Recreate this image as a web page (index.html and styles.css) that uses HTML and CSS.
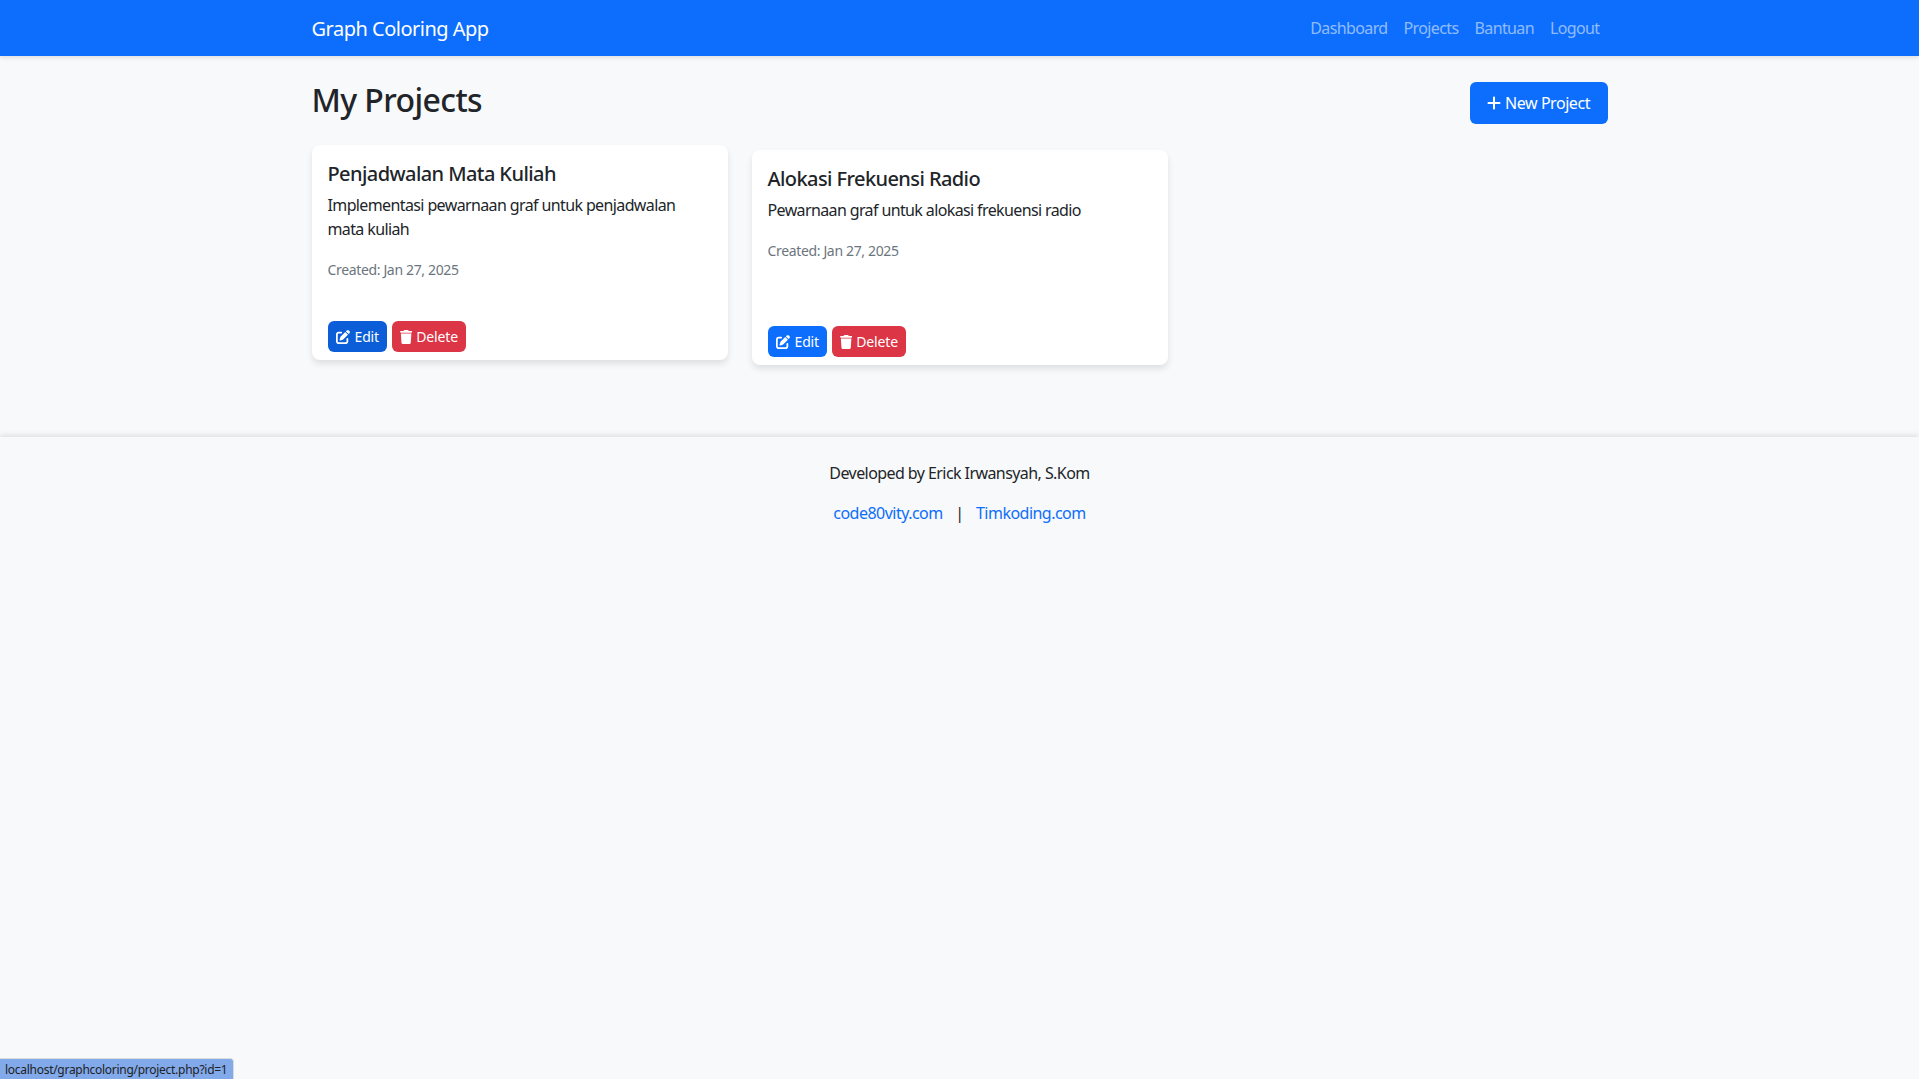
FILE: index.html
```html
<!DOCTYPE html>
<html lang="en">
<head>
  <meta charset="UTF-8">
  <meta name="viewport" content="width=device-width, initial-scale=1.0">
  <title>My Projects - Graph Coloring App</title>
  <link rel="stylesheet" href="styles.css">
</head>
<body>
  <nav class="navbar">
    <div class="container navbar-inner">
      <a class="brand" href="#">Graph Coloring App</a>
      <div class="nav-links">
        <a href="#">Dashboard</a>
        <a href="#">Projects</a>
        <a href="#">Bantuan</a>
        <a href="#">Logout</a>
      </div>
    </div>
  </nav>

  <main class="container main">
    <div class="page-head">
      <h2>My Projects</h2>
      <a class="btn btn-primary btn-new" href="#">
        <svg class="icon" viewBox="0 0 448 512"><path d="M256 80c0-17.7-14.3-32-32-32s-32 14.3-32 32V224H48c-17.7 0-32 14.3-32 32s14.3 32 32 32H192V432c0 17.7 14.3 32 32 32s32-14.3 32-32V288H400c17.7 0 32-14.3 32-32s-14.3-32-32-32H256V80z"/></svg>
        New Project
      </a>
    </div>

    <div class="project-grid">
      <div class="card card-raised">
        <div class="card-body">
          <h5>Penjadwalan Mata Kuliah</h5>
          <p>Implementasi pewarnaan graf untuk penjadwalan mata kuliah</p>
          <p class="muted">Created: Jan 27, 2025</p>
        </div>
        <div class="card-footer">
          <a class="btn btn-sm btn-primary btn-hover" href="#">
            <svg class="icon" viewBox="0 0 512 512"><path d="M471.6 21.7c-21.9-21.9-57.3-21.9-79.2 0L362.3 51.7l97.9 97.9 30.1-30.1c21.9-21.9 21.9-57.3 0-79.2L471.6 21.7zm-299.2 220c-6.1 6.1-10.8 13.6-13.5 21.9l-29.6 88.8c-2.9 8.6-.6 18.1 5.8 24.6s15.9 8.7 24.6 5.8l88.8-29.6c8.2-2.7 15.7-7.4 21.9-13.5L437.7 172.3 339.7 74.3 172.4 241.7zM96 64C43 64 0 107 0 160V416c0 53 43 96 96 96H352c53 0 96-43 96-96V320c0-17.7-14.3-32-32-32s-32 14.3-32 32v96c0 17.7-14.3 32-32 32H96c-17.7 0-32-14.3-32-32V160c0-17.7 14.3-32 32-32h96c17.7 0 32-14.3 32-32s-14.3-32-32-32H96z"/></svg>
            Edit
          </a>
          <a class="btn btn-sm btn-danger" href="#">
            <svg class="icon icon-narrow" viewBox="0 0 448 512"><path d="M135.2 17.7L128 32H32C14.3 32 0 46.3 0 64S14.3 96 32 96H416c17.7 0 32-14.3 32-32s-14.3-32-32-32H320l-7.2-14.3C307.4 6.8 296.3 0 284.2 0H163.8c-12.1 0-23.2 6.8-28.6 17.7zM416 128H32L53.2 467c1.6 25.3 22.6 45 47.9 45H346.9c25.3 0 46.3-19.7 47.9-45L416 128z"/></svg>
            Delete
          </a>
        </div>
      </div>

      <div class="card">
        <div class="card-body">
          <h5>Alokasi Frekuensi Radio</h5>
          <p>Pewarnaan graf untuk alokasi frekuensi radio</p>
          <p class="muted">Created: Jan 27, 2025</p>
        </div>
        <div class="card-footer">
          <a class="btn btn-sm btn-primary" href="#">
            <svg class="icon" viewBox="0 0 512 512"><path d="M471.6 21.7c-21.9-21.9-57.3-21.9-79.2 0L362.3 51.7l97.9 97.9 30.1-30.1c21.9-21.9 21.9-57.3 0-79.2L471.6 21.7zm-299.2 220c-6.1 6.1-10.8 13.6-13.5 21.9l-29.6 88.8c-2.9 8.6-.6 18.1 5.8 24.6s15.9 8.7 24.6 5.8l88.8-29.6c8.2-2.7 15.7-7.4 21.9-13.5L437.7 172.3 339.7 74.3 172.4 241.7zM96 64C43 64 0 107 0 160V416c0 53 43 96 96 96H352c53 0 96-43 96-96V320c0-17.7-14.3-32-32-32s-32 14.3-32 32v96c0 17.7-14.3 32-32 32H96c-17.7 0-32-14.3-32-32V160c0-17.7 14.3-32 32-32h96c17.7 0 32-14.3 32-32s-14.3-32-32-32H96z"/></svg>
            Edit
          </a>
          <a class="btn btn-sm btn-danger" href="#">
            <svg class="icon icon-narrow" viewBox="0 0 448 512"><path d="M135.2 17.7L128 32H32C14.3 32 0 46.3 0 64S14.3 96 32 96H416c17.7 0 32-14.3 32-32s-14.3-32-32-32H320l-7.2-14.3C307.4 6.8 296.3 0 284.2 0H163.8c-12.1 0-23.2 6.8-28.6 17.7zM416 128H32L53.2 467c1.6 25.3 22.6 45 47.9 45H346.9c25.3 0 46.3-19.7 47.9-45L416 128z"/></svg>
            Delete
          </a>
        </div>
      </div>
    </div>
  </main>

  <footer class="footer">
    <p>Developed by Erick Irwansyah, S.Kom</p>
    <p class="footer-links"><a href="#">code80vity.com</a><span>|</span><a href="#">Timkoding.com</a></p>
  </footer>

  <div class="status-bubble">localhost/graphcoloring/project.php?id=1</div>
</body>
</html>
```

FILE: styles.css
```css
* {
  box-sizing: border-box;
}
body {
  margin: 0;
  font-family: "Noto Sans", "Open Sans", sans-serif;
  font-size: 16px;
  line-height: 24px;
  color: #212529;
  background: #f8f9fa;
}
a {
  text-decoration: none;
}
.container {
  width: 1320px;
  margin: 0 auto;
  padding: 0 12px;
}
.navbar {
  height: 56px;
  background: #0d6efd;
  box-shadow: 0 2px 4px rgba(0, 0, 0, 0.1);
}
.navbar-inner {
  height: 100%;
  display: flex;
  align-items: center;
  justify-content: space-between;
}
.brand {
  padding-top: 2px;
  font-size: 20px;
  color: #fff;
  letter-spacing: -0.5px;
}
.nav-links {
  display: flex;
}
.nav-links a {
  padding: 8px;
  color: rgba(255, 255, 255, 0.55);
  letter-spacing: -0.62px;
}
.main {
  padding-top: 24px;
}
.page-head {
  display: flex;
  align-items: center;
  justify-content: space-between;
  margin-bottom: 24px;
}
.page-head h2 {
  margin: 1px 0 7px;
  font-size: 32px;
  line-height: 38px;
  font-weight: 500;
  letter-spacing: -0.6px;
}
.btn {
  display: inline-flex;
  align-items: center;
  color: #fff;
  border-radius: 6px;
}
.btn-primary {
  background: #0d6efd;
}
.btn-hover {
  background: #0b5ed7;
}
.btn-danger {
  background: #dc3545;
}
.btn-new {
  height: 42px;
  padding: 0 17.5px;
  gap: 4px;
  letter-spacing: -0.45px;
}
.btn-new .icon {
  width: 14px;
  height: 16px;
}
.btn-sm {
  height: 31px;
  padding: 0 8px;
  gap: 5px;
  font-size: 14px;
  letter-spacing: -0.15px;
}
.icon {
  width: 14px;
  height: 14px;
  fill: currentColor;
  flex: none;
}
.icon-narrow {
  width: 12.25px;
  margin-right: -1px;
}
.project-grid {
  display: grid;
  grid-template-columns: repeat(3, 1fr);
  gap: 24px;
  margin-bottom: 24px;
}
.card {
  display: flex;
  flex-direction: column;
  background: #fff;
  border-radius: 8px;
  box-shadow: 0 4px 6px rgba(0, 0, 0, 0.1);
}
.card-raised {
  transform: translateY(-5px);
}
.card-body {
  flex: 1;
  padding: 16px;
}
.card-body h5 {
  margin: 1px 0 7px;
  font-size: 20px;
  line-height: 24px;
  font-weight: 500;
  letter-spacing: -0.58px;
}
.card-body p {
  margin: 0 0 16px;
  font-size: 16px;
  letter-spacing: -0.62px;
}
.card-body .muted {
  padding-top: 1px;
  margin-bottom: 15px;
  font-size: 14px;
  color: #6c757d;
  letter-spacing: -0.35px;
}
.card-footer {
  display: flex;
  gap: 5px;
  padding: 8px 16px;
}
.footer {
  margin-top: 72px;
  padding: 24px 0;
  text-align: center;
  box-shadow: 0 -2px 5px rgba(0, 0, 0, 0.1);
}
.footer p {
  margin: 0 0 16px;
  letter-spacing: -0.57px;
}
.footer-links a {
  color: #0d6efd;
  letter-spacing: -0.52px;
}
.footer-links span {
  margin: 0 12.5px;
}
.status-bubble {
  position: fixed;
  left: 0;
  bottom: 0;
  width: 234px;
  height: 21px;
  padding: 1px 5px 0;
  font-size: 12px;
  line-height: 20px;
  color: #202124;
  background: #82aaea;
  border-top: 1px solid #dadce0;
  border-right: 1px solid #dadce0;
  border-top-right-radius: 4px;
  letter-spacing: -0.28px;
}
```
